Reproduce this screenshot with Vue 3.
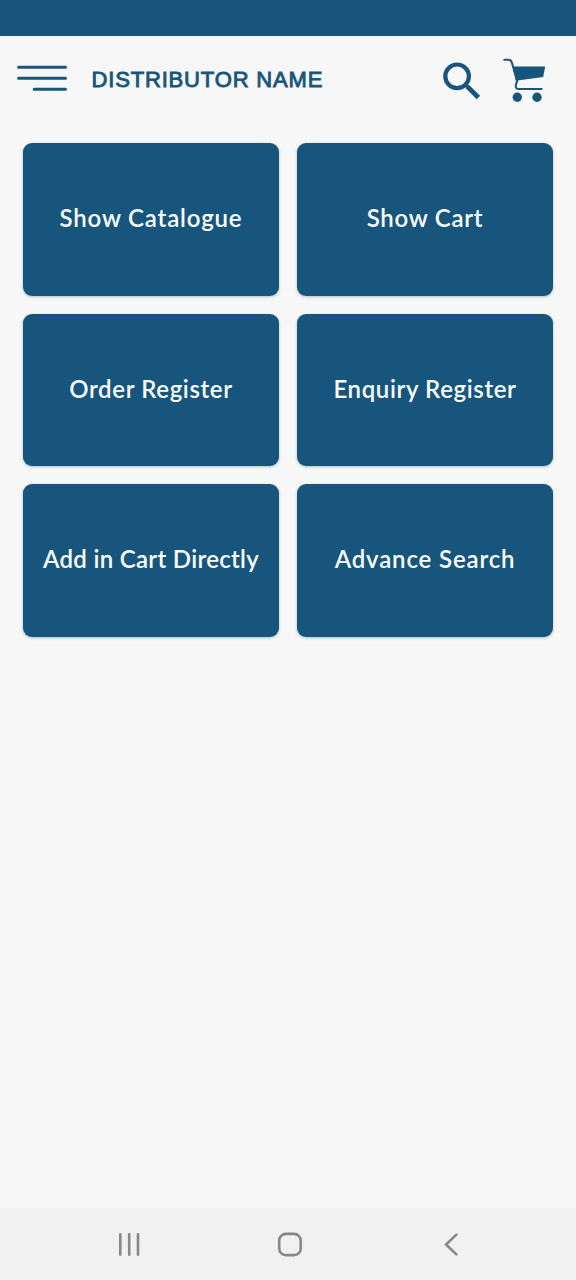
<script setup>
const actions = [
  { label: 'Show Catalogue', kind: 'catalogue' },
  { label: 'Show Cart', kind: 'cart' },
  { label: 'Order Register', kind: 'orders' },
  { label: 'Enquiry Register', kind: 'enquiries' },
  { label: 'Add in Cart Directly', kind: 'direct' },
  { label: 'Advance Search', kind: 'search' },
]
</script>

<template>
  <div class="screen">
    <div class="status"></div>
    <header class="bar">
      <svg class="menu" width="52" height="28" viewBox="0 0 52 28">
        <path d="M2.5 3.2H49.5M2.5 14.2H49.5M18.2 25.2H49.5" />
      </svg>
      <h1 class="title">DISTRIBUTOR NAME</h1>
      <svg class="find" width="40" height="40" viewBox="0 0 40 40">
        <circle cx="15.1" cy="15.3" r="11.8" />
        <path class="neck" d="M22.5 22.7L27 27" />
        <path class="handle" d="M25.4 25.6L36.4 36.5" />
      </svg>
      <svg class="trolley" width="44" height="46" viewBox="0 0 44 46">
        <path class="fill" d="M10.2 8.4H42.2L40.2 19.1L12.8 22.7Z" />
        <path class="line" d="M1.2 1.8H5.4Q8 1.8 8.8 4.4L14.2 23.4Q12.4 26.3 12.8 28.8Q13.2 31 15.8 31H38.6" />
        <circle class="fill" cx="14.3" cy="39.2" r="4.7" />
        <circle class="fill" cx="34" cy="39.2" r="4.7" />
      </svg>
    </header>
    <main class="grid">
      <button v-for="a in actions" :key="a.kind" class="card" type="button">
        <span :class="['label', a.kind]">{{ a.label }}</span>
      </button>
    </main>
    <nav class="nav">
      <svg width="26" height="26" viewBox="0 0 26 26">
        <path d="M4.3 2.3V22.7M13.2 2.3V22.7M22 2.3V22.7" />
      </svg>
      <svg width="26" height="26" viewBox="0 0 26 26">
        <rect x="2.2" y="1.9" width="21.5" height="21.2" rx="6.6" />
      </svg>
      <svg width="26" height="26" viewBox="0 0 26 26">
        <path d="M18.4 2.6L8 12.5L18.4 22.4" />
      </svg>
    </nav>
  </div>
</template>

<style>
body {
  margin: 0;
  background: #f7f7f7;
}
</style>

<style scoped>
.screen {
  display: flex;
  flex-direction: column;
  width: 576px;
  height: 1280px;
  overflow: hidden;
  background: #f7f7f7;
  font-family: Lato, "Liberation Sans", sans-serif;
}
.status {
  height: 36px;
  flex: none;
  background: #18557c;
}
.bar {
  display: flex;
  height: 107px;
  flex: none;
  box-sizing: border-box;
  padding: 21px 29px 0 16px;
}
.bar svg {
  flex: none;
  fill: none;
  stroke: #18557c;
}
.menu {
  margin-top: 7px;
  stroke-width: 3;
  stroke-linecap: round;
}
.title {
  margin: 9px 0 0 23.5px;
  width: 351.5px;
  font: 400 22px/28px "Liberation Sans", Arial, sans-serif;
  letter-spacing: 0.83px;
  white-space: nowrap;
  color: #18557c;
  -webkit-text-stroke: 0.9px #18557c;
}
.find {
  margin-top: 4px;
  stroke-width: 4.2;
}
.find .neck {
  stroke-width: 3.4;
}
.find .handle {
  stroke-width: 4.8;
}
.trolley {
  margin: 1px 0 0 21px;
}
.trolley .fill {
  fill: #18557c;
  stroke: none;
}
.trolley .line {
  stroke-width: 2;
  stroke-linecap: round;
  stroke-linejoin: round;
}
.grid {
  display: grid;
  grid-template-columns: 256px 256px;
  grid-auto-rows: 152.6px;
  gap: 18px;
  padding-left: 23px;
  flex: 1;
  align-content: start;
}
.card {
  display: flex;
  align-items: center;
  justify-content: center;
  padding: 0 0 2px;
  border: 0;
  border-radius: 9px;
  background: #18557c;
  box-shadow: 0 1px 3px rgba(24, 85, 124, 0.35);
  color: #fafdff;
  font: 600 24px/30px Lato, sans-serif;
  white-space: nowrap;
}
.catalogue {
  letter-spacing: 0.82px;
}
.cart {
  letter-spacing: 0.72px;
}
.orders {
  letter-spacing: 0.62px;
}
.enquiries {
  letter-spacing: 0.62px;
}
.direct {
  letter-spacing: 0.3px;
}
.search {
  letter-spacing: 0.85px;
}
.nav {
  display: flex;
  align-items: center;
  gap: 135px;
  height: 72px;
  flex: none;
  box-sizing: border-box;
  padding: 2px 0 0 116px;
  background: #f1f1f1;
}
.nav svg {
  fill: none;
  stroke: #888;
  stroke-width: 2.6;
  stroke-linecap: round;
}
</style>
